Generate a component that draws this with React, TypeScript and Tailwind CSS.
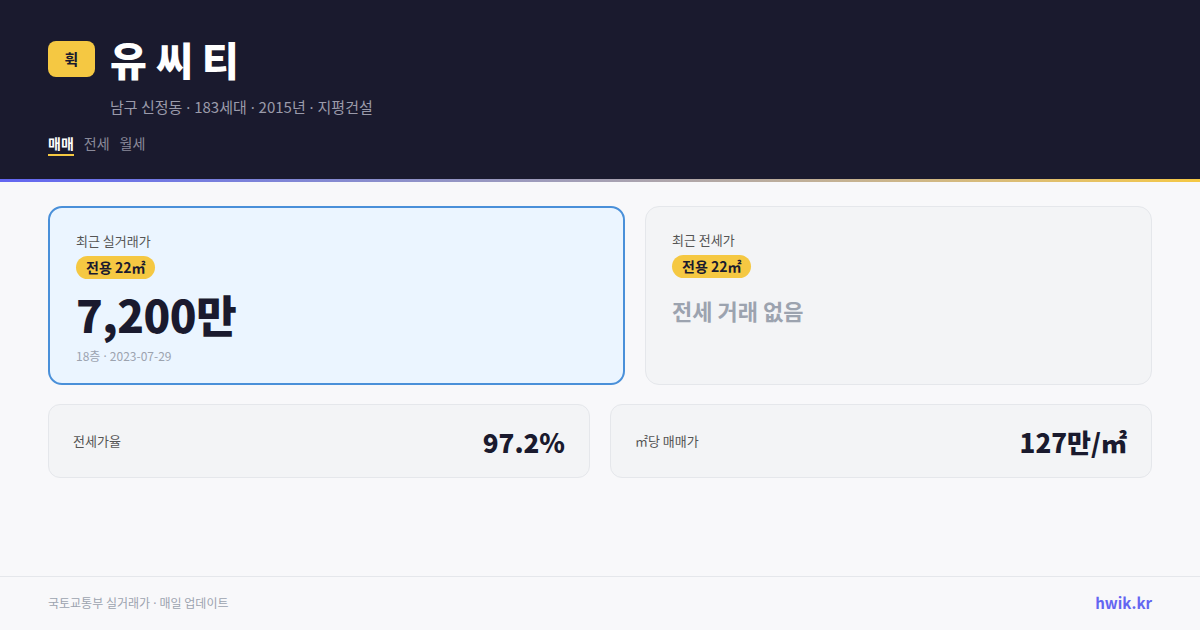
import React from 'react';

const FONT = { fontFamily: '"Noto Sans CJK KR", "Noto Sans", sans-serif' };

function Dot() {
  return <span style={{ fontFamily: '"Noto Sans", sans-serif' }}> · </span>;
}

function Badge() {
  return (
    <span className="inline-flex h-[23px] items-center rounded-full bg-[#f5c842] px-[10px] text-[14px] font-bold leading-none text-[#1a1a2e]">
      전용 22㎡
    </span>
  );
}

export default function App() {
  return (
    <div style={FONT} className="flex h-[630px] w-[1200px] flex-col overflow-hidden bg-[#f8f8fa]">
      {/* header */}
      <header className="bg-[#1a1a2e] px-12 pb-[23px] pt-[39px]">
        <div className="flex items-center gap-[15px]">
          <span className="flex h-[36px] w-[47px] items-center justify-center rounded-[8px] bg-[#f5c842] text-[15px] font-bold text-[#1a1a2e]">휙</span>
          <h1 className="text-[40px] font-black leading-[40px] text-white">유 씨 티</h1>
        </div>
        <p className="mt-[17px] pl-[62px] text-[15px] leading-[22px] text-[#9a9aaa]">
          남구 신정동<Dot />183세대<Dot />2015년<Dot />지평건설
        </p>
        <nav className="mt-[15px] flex gap-[10px] text-[14px] leading-[20px]">
          <span className="border-b-2 border-[#f5c842] pb-[1px] font-bold text-white">매매</span>
          <span className="text-[#8a8a9a]">전세</span>
          <span className="text-[#8a8a9a]">월세</span>
        </nav>
      </header>
      <div className="h-[3px] bg-gradient-to-r from-[#6366f1] to-[#f5c842]" />

      {/* main */}
      <main className="flex-1 px-12 pt-[24px]">
        <div className="grid grid-cols-[577px_507px] gap-5">
          <section className="h-[179px] rounded-[14px] border-2 border-[#4a90d9] bg-[#ebf5ff] px-[26px] pt-[24px]">
            <div className="text-[13px] leading-[18px] text-[#555]">최근 실거래가</div>
            <div className="mt-[4px]"><Badge /></div>
            <div className="mt-[8px] text-[44px] font-black leading-[54px] tracking-[-0.5px] text-[#1a1a2e]">7,200만</div>
            <div className="mt-[7px] text-[12px] leading-[16px] text-[#9ca3af]">18층<Dot />2023-07-29</div>
          </section>
          <section className="h-[179px] rounded-[14px] border border-[#e5e7eb] bg-[#f3f4f6] px-[26px] pt-[24px]">
            <div className="text-[13px] leading-[18px] text-[#555]">최근 전세가</div>
            <div className="mt-[4px]"><Badge /></div>
            <div className="mt-[17px] text-[22px] font-bold leading-[30px] text-[#9ca3af]">전세 거래 없음</div>
          </section>
        </div>

        <div className="mt-[19px] grid grid-cols-2 gap-5">
          <div className="flex h-[74px] items-center justify-between rounded-[12px] border border-[#e5e7eb] bg-[#f3f4f6] px-6">
            <span className="text-[13px] text-[#555]">전세가율</span>
            <span className="text-[26px] font-extrabold text-[#1a1a2e]">97.2%</span>
          </div>
          <div className="flex h-[74px] items-center justify-between rounded-[12px] border border-[#e5e7eb] bg-[#f3f4f6] px-6">
            <span className="text-[13px] text-[#555]">㎡당 매매가</span>
            <span className="text-[26px] font-extrabold text-[#1a1a2e]">127만/㎡</span>
          </div>
        </div>
      </main>

      {/* footer */}
      <footer className="flex h-[54px] items-center justify-between border-t border-[#e5e7eb] px-12">
        <span className="text-[12px] text-[#9ca3af]">국토교통부 실거래가<Dot />매일 업데이트</span>
        <span className="text-[15px] font-bold text-[#6366f1]">hwik.kr</span>
      </footer>
    </div>
  );
}
